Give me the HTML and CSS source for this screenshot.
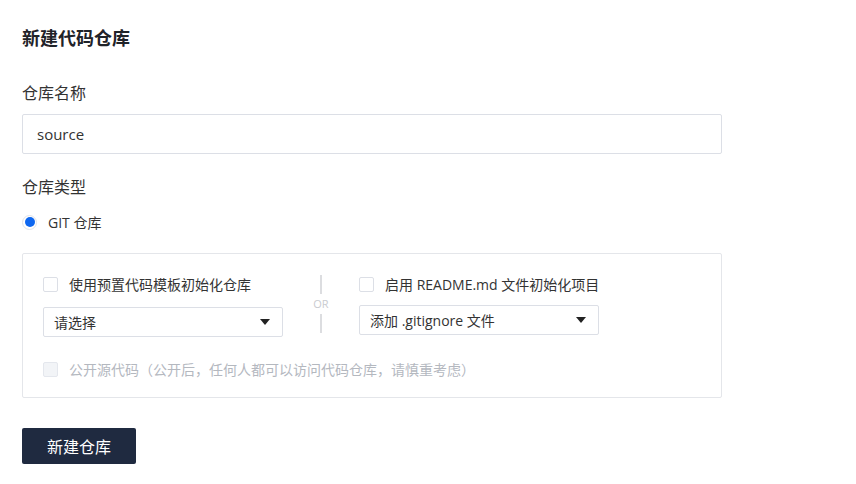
FILE: index.html
```html
<!DOCTYPE html>
<html lang="zh-CN">
<head>
<meta charset="utf-8">
<title>新建代码仓库</title>
<link rel="stylesheet" href="styles.css">
</head>
<body>
<div class="page">
  <h1 class="title">新建代码仓库</h1>

  <div class="field-label label-name">仓库名称</div>
  <div class="input">source</div>

  <div class="field-label label-type">仓库类型</div>
  <div class="radio-row">
    <span class="radio"><span class="radio-dot"></span></span>
    <span class="radio-text">GIT 仓库</span>
  </div>

  <div class="options">
    <div class="options-grid">
      <div class="col">
        <div class="check-row">
          <span class="checkbox"></span>
          <span class="check-text">使用预置代码模板初始化仓库</span>
        </div>
        <div class="select">
          <span>请选择</span>
          <span class="caret"></span>
        </div>
      </div>
      <div class="divider">
        <span class="divider-line"></span>
        <span class="divider-or">OR</span>
        <span class="divider-line"></span>
      </div>
      <div class="col">
        <div class="check-row">
          <span class="checkbox"></span>
          <span class="check-text">启用 README.md 文件初始化项目</span>
        </div>
        <div class="select select-right">
          <span>添加 .gitignore 文件</span>
          <span class="caret"></span>
        </div>
      </div>
    </div>
    <div class="check-row disabled-row">
      <span class="checkbox checkbox-disabled"></span>
      <span class="check-text">公开源代码（公开后，任何人都可以访问代码仓库，请慎重考虑）</span>
    </div>
  </div>

  <button class="submit">新建仓库</button>
</div>
</body>
</html>
```

FILE: styles.css
```css
* { box-sizing: border-box; }
html, body { margin: 0; padding: 0; background: #fff; }
body {
  font-family: "Open Sans", "Noto Sans CJK SC", sans-serif;
  font-size: 14px;
  color: #333;
}
.page {
  padding: 26px 22px 0 22px;
  width: 744px;
}
.title {
  margin: 0;
  font-size: 18px;
  line-height: 24px;
  font-weight: 700;
  color: #1f2329;
}
.field-label {
  font-size: 16px;
  line-height: 22px;
  color: #333;
}
.label-name { margin-top: 32px; }
.label-type { margin-top: 22px; }
.input {
  margin-top: 10px;
  width: 700px;
  height: 40px;
  border: 1px solid #dcdfe6;
  border-radius: 2px;
  padding: 0 14px;
  line-height: 38px;
  font-size: 15px;
  color: #333;
}
.radio-row {
  margin-top: 13px;
  display: flex;
  align-items: center;
  height: 22px;
}
.radio {
  width: 15px;
  height: 15px;
  border-radius: 50%;
  border: 1px solid #e0e3e9;
  display: flex;
  align-items: center;
  justify-content: center;
}
.radio-dot {
  width: 10px;
  height: 10px;
  border-radius: 50%;
  background: #0e67f0;
}
.radio-text {
  margin-left: 11px;
  font-size: 14px;
  color: #333;
}
.options {
  margin-top: 20px;
  width: 700px;
  border: 1px solid #e4e6ea;
  border-radius: 2px;
  padding: 19px 20px 17px 20px;
}
.options-grid {
  display: grid;
  grid-template-columns: 240px 76px 240px;
}
.col { display: flex; flex-direction: column; }
.check-row {
  display: flex;
  align-items: center;
  height: 22px;
  font-size: 14px;
}
.checkbox {
  width: 15px;
  height: 15px;
  border: 1px solid #dcdfe6;
  border-radius: 2px;
  background: #fff;
  flex: none;
}
.check-text {
  margin-left: 11px;
  color: #333;
  white-space: nowrap;
}
.select {
  margin-top: 12px;
  height: 30px;
  border: 1px solid #dcdfe6;
  border-radius: 2px;
  display: flex;
  align-items: center;
  justify-content: space-between;
  padding: 0 12px 0 10px;
  font-size: 14px;
  color: #333;
}
.select-right { margin-top: 10px; }
.caret {
  width: 0;
  height: 0;
  border-left: 5px solid transparent;
  border-right: 5px solid transparent;
  border-top: 6px solid #222;
}
.divider {
  display: flex;
  flex-direction: column;
  align-items: center;
  padding-top: 2px;
}
.divider-line {
  width: 2px;
  height: 19px;
  background: #dcdde0;
}
.divider-or {
  font-size: 11px;
  line-height: 14px;
  margin: 3px 0 3px 0;
  color: #c9cbd0;
}
.disabled-row {
  margin-top: 21px;
}
.checkbox-disabled {
  background: #f2f4f7;
  border-color: #e4e7ed;
}
.disabled-row .check-text { color: #b4b8bf; }
.submit {
  display: block;
  margin-top: 30px;
  width: 114px;
  height: 36px;
  border: none;
  border-radius: 2px;
  background: #1f2a40;
  color: #fff;
  font-family: "Open Sans", "Noto Sans CJK SC", sans-serif;
  font-size: 16px;
  padding: 0;
  cursor: pointer;
}
```
